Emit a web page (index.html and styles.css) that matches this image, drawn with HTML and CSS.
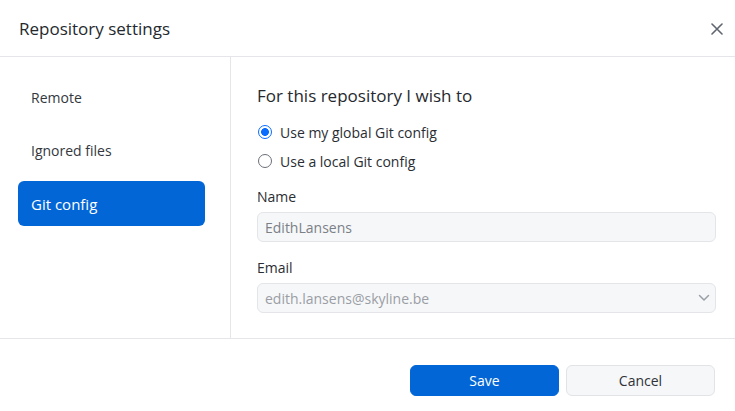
FILE: index.html
```html
<!DOCTYPE html>
<html>
<head>
<meta charset="utf-8">
<link rel="stylesheet" href="styles.css">
</head>
<body>
<div class="dialog">
  <header class="header">
    <h1 class="title">Repository settings</h1>
    <button class="close" aria-label="Close">
      <svg width="12" height="12" viewBox="0 0 12 12"><path d="M1 1L11 11M11 1L1 11" stroke="#5f6670" stroke-width="1.6" stroke-linecap="round"/></svg>
    </button>
  </header>
  <div class="body">
    <nav class="sidebar">
      <div class="nav-item">Remote</div>
      <div class="nav-item">Ignored files</div>
      <div class="nav-item active">Git config</div>
    </nav>
    <main class="content">
      <h2 class="heading">For this repository I wish to</h2>
      <div class="radios">
        <label class="radio"><span class="dot checked"></span>Use my global Git config</label>
        <label class="radio"><span class="dot"></span>Use a local Git config</label>
      </div>
      <div class="field">
        <div class="label">Name</div>
        <div class="input">EdithLansens</div>
      </div>
      <div class="field">
        <div class="label">Email</div>
        <div class="input select">edith.lansens@skyline.be
          <svg class="chev" width="12" height="8" viewBox="0 0 12 8"><path d="M1.5 1.5L6 6L10.5 1.5" fill="none" stroke="#9aa0a8" stroke-width="1.5" stroke-linecap="round" stroke-linejoin="round"/></svg>
        </div>
      </div>
    </main>
  </div>
  <footer class="footer">
    <button class="btn primary">Save</button>
    <button class="btn secondary">Cancel</button>
  </footer>
</div>
</body>
</html>
```
FILE: styles.css
```css
html, body {
  margin: 0;
  padding: 0;
  background: #ffffff;
}
body {
  font-family: "Open Sans", "Noto Sans", sans-serif;
  color: #2b2f33;
  width: 735px;
  height: 411px;
  overflow: hidden;
}
.dialog {
  display: flex;
  flex-direction: column;
  height: 411px;
}
.header {
  height: 57px;
  border-bottom: 1px solid #e4e6e9;
  display: flex;
  align-items: center;
  justify-content: space-between;
  padding: 0 12px 0 19px;
  box-sizing: border-box;
  flex: none;
}
.title {
  margin: 0;
  font-size: 17px;
  font-weight: 400;
  color: #25292e;
}
.close {
  background: none;
  border: none;
  padding: 0;
  width: 12px;
  height: 12px;
  display: flex;
  margin-top: 1px;
}
.body {
  display: flex;
  height: 281px;
  flex: none;
  border-bottom: 1px solid #e4e6e9;
}
.sidebar {
  width: 231px;
  border-right: 1px solid #e4e6e9;
  padding: 18px 25px 0 18px;
  box-sizing: border-box;
  display: flex;
  flex-direction: column;
  gap: 8px;
}
.nav-item {
  height: 45px;
  display: flex;
  align-items: center;
  padding-left: 13px;
  font-size: 14px;
  color: #33383e;
  border-radius: 6px;
}
.nav-item.active {
  background: #0366d6;
  color: #ffffff;
  font-size: 15px;
}
.content {
  flex: 1;
  padding: 27px 19px 0 26px;
  box-sizing: border-box;
}
.heading {
  margin: 0 0 14px;
  font-size: 17px;
  font-weight: 500;
  color: #25292e;
}
.radios {
  display: flex;
  flex-direction: column;
  gap: 7px;
  margin-bottom: 15px;
}
.radio {
  display: flex;
  align-items: center;
  font-size: 14px;
  color: #2a2e33;
  height: 22px;
}
.dot {
  width: 14px;
  height: 14px;
  border: 1.3px solid #6b7078;
  border-radius: 50%;
  margin: 0 8px 0 1px;
  box-sizing: border-box;
  flex: none;
}
.dot.checked {
  border: 1.6px solid #0a6cff;
  background: radial-gradient(circle, #0a6cff 0 3.6px, #ffffff 4.2px);
}
.field {
  margin-bottom: 16px;
}
.label {
  font-size: 14px;
  color: #2a2e33;
  margin-bottom: 6px;
  line-height: 19px;
}
.input {
  height: 30px;
  box-sizing: border-box;
  border: 1px solid #e3e5e8;
  background: #f6f7f9;
  border-radius: 6px;
  padding: 0 7px;
  display: flex;
  align-items: center;
  font-size: 14px;
  color: #7b8087;
}
.select {
  justify-content: space-between;
  color: #9a9ea4;
  padding-right: 5px;
}
.footer {
  flex: 1;
  display: flex;
  justify-content: flex-end;
  align-items: flex-start;
  padding: 26px 20px 0 0;
  gap: 7px;
}
.btn {
  width: 149px;
  height: 31px;
  border-radius: 6px;
  font-family: "Open Sans", "Noto Sans", sans-serif;
  font-size: 14px;
  cursor: pointer;
}
.primary {
  background: #0366d6;
  border: 1px solid #0366d6;
  color: #ffffff;
}
.secondary {
  background: #f6f7f9;
  border: 1px solid #e1e3e6;
  color: #2f3338;
}
```
